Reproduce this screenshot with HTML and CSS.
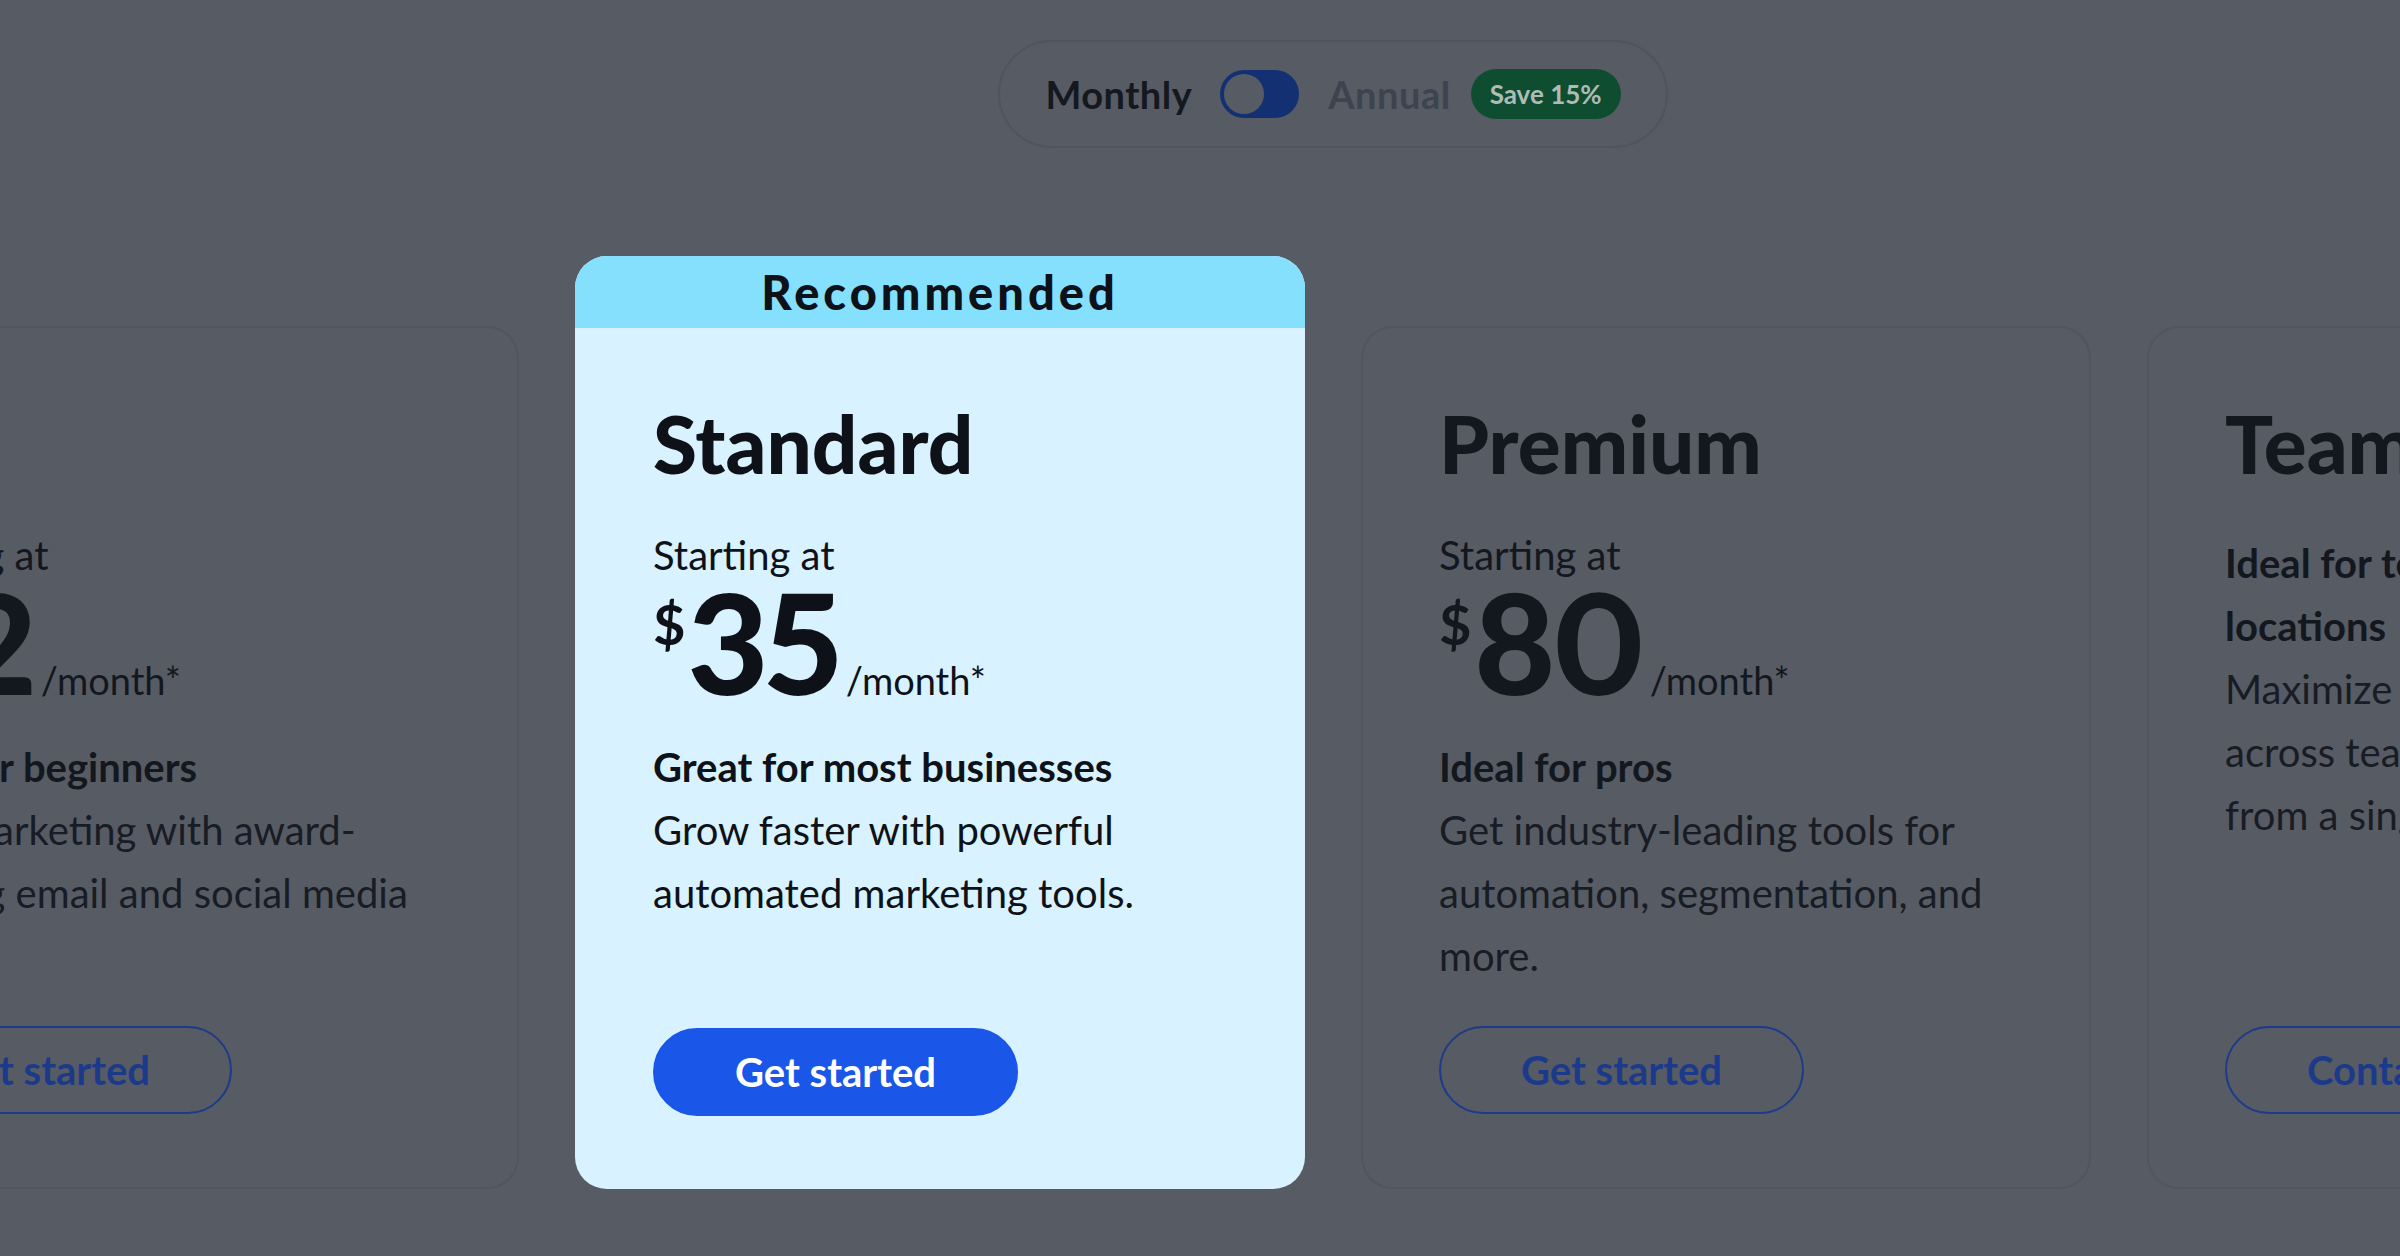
FILE: index.html
```html
<!DOCTYPE html>
<html lang="en">
<head>
  <meta charset="UTF-8">
  <title>Plans &amp; Pricing</title>
  <link rel="stylesheet" href="styles.css">
</head>
<body>

  <main class="pricing">

    <!-- Billing period switch -->
    <div class="billing">
      <div class="billing-toggle">
        <span class="billing-label is-active">Monthly</span>
        <span class="switch"><span class="switch-knob"></span></span>
        <span class="billing-label">Annual</span>
        <span class="save-badge">Save 15%</span>
      </div>
    </div>

    <!-- Plan cards -->
    <div class="plans">

      <section class="plan">
        <div class="plan-body">
          <h2 class="plan-name">Lite</h2>
          <p class="plan-from">Starting at</p>
          <p class="plan-price"><span class="cur">$</span><span class="amount">12</span><span class="per">/month*</span></p>
          <p class="plan-lead">Ideal for beginners</p>
          <p class="plan-desc">Start marketing with award-winning email and social media tools.</p>
          <button class="plan-cta">Get started</button>
        </div>
      </section>

      <section class="plan plan--featured">
        <div class="plan-ribbon">Recommended</div>
        <div class="plan-body">
          <h2 class="plan-name">Standard</h2>
          <p class="plan-from">Starting at</p>
          <p class="plan-price"><span class="cur">$</span><span class="amount">35</span><span class="per">/month*</span></p>
          <p class="plan-lead">Great for most businesses</p>
          <p class="plan-desc">Grow faster with powerful automated marketing tools.</p>
          <button class="plan-cta">Get started</button>
        </div>
      </section>

      <section class="plan">
        <div class="plan-body">
          <h2 class="plan-name">Premium</h2>
          <p class="plan-from">Starting at</p>
          <p class="plan-price"><span class="cur">$</span><span class="amount">80</span><span class="per">/month*</span></p>
          <p class="plan-lead">Ideal for pros</p>
          <p class="plan-desc">Get industry-leading tools for automation, segmentation, and more.</p>
          <button class="plan-cta">Get started</button>
        </div>
      </section>

      <section class="plan">
        <div class="plan-body">
          <h2 class="plan-name">Teams</h2>
          <p class="plan-lead plan-lead--first">Ideal for teams and multiple locations</p>
          <p class="plan-desc">Maximize your impact<br>across teams and locations<br>from a single account.</p>
          <button class="plan-cta">Contact sales</button>
        </div>
      </section>

    </div>
  </main>

</body>
</html>
```

FILE: styles.css
```css
html, body {
  overflow: hidden;
}

body {
  margin: 0;
  height: 1256px;
  background: #575b64;
  font-family: Lato, 'Open Sans', sans-serif;
  color: #13171e;
}

p, h2 {
  margin: 0;
}

/* the row of cards is wider than the window, so the wrapper is shifted left */
.pricing {
  width: 3088px;
  margin-left: -211px;
  padding-top: 40px;
}

/* Monthly / Annual switch */
.billing {
  display: flex;
  justify-content: center;
}

.billing-toggle {
  display: flex;
  align-items: center;
  height: 108px;
  box-sizing: border-box;
  padding: 0 45px;
  border: 2px solid #50545c;
  border-radius: 54px;
}

.billing-label {
  font-size: 38px;
  font-weight: 700;
  letter-spacing: 0.5px;
  color: #3e4350;
}

.billing-label.is-active {
  color: #14181f;
}

.switch {
  display: flex;
  align-items: center;
  width: 79px;
  height: 48px;
  box-sizing: border-box;
  padding: 4px;
  margin: 0 29px 0 28px;
  border-radius: 24px;
  background: #133172;
}

.switch-knob {
  width: 40px;
  height: 40px;
  border-radius: 50%;
  background: #575b64;
}

.save-badge {
  display: flex;
  align-items: center;
  height: 50px;
  margin-left: 20px;
  padding: 0 19px;
  border-radius: 25px;
  background: #0f4d31;
  color: #aebcb5;
  font-size: 26px;
  font-weight: 700;
}

/* Cards */
.plans {
  display: flex;
  gap: 56px;
  height: 933px;
  margin-top: 108px;
}

.plan {
  flex: none;
  width: 730px;
  box-sizing: border-box;
  margin-top: 70px;
  border: 2px solid #51555e;
  border-radius: 32px;
  display: flex;
  flex-direction: column;
}

.plan--featured {
  margin-top: 0;
  border: none;
  background: #d9f2ff;
  overflow: hidden;
  color: #0e1218;
}

.plan-ribbon {
  height: 72px;
  display: flex;
  align-items: center;
  justify-content: center;
  background: #85e0fe;
  font-size: 47px;
  font-weight: 900;
  letter-spacing: 4px;
}

.plan-body {
  flex: 1;
  display: flex;
  flex-direction: column;
  padding: 67px 76px 73px;
}

.plan--featured .plan-body {
  padding-left: 78px;
}

.plan-name {
  font-size: 80px;
  font-weight: 900;
  line-height: 96px;
}

.plan-from {
  margin-top: 40px;
  font-size: 40px;
  line-height: 48px;
}

/* font-size set on the line itself so the strut matches the big digits */
.plan-price {
  margin-top: 4px;
  font-size: 140px;
  font-weight: 900;
  line-height: 116px;
  white-space: nowrap;
}

.plan-price .cur {
  font-size: 56px;
  font-weight: 700;
  line-height: 1;
  vertical-align: 50px;
}

.plan-price .amount {
  margin-left: 2px;
  letter-spacing: -4px;
  font-variant-numeric: proportional-nums;
}

.plan-price .per {
  margin-left: 8px;
  font-size: 38px;
  font-weight: 400;
  line-height: 1;
}

.plan-lead {
  margin-top: 37px;
  font-size: 40px;
  font-weight: 700;
  line-height: 63px;
}

.plan-lead--first {
  margin-top: 41px;
}

.plan-desc {
  font-size: 40px;
  line-height: 63px;
  color: #181c24;
}

.plan--featured .plan-desc {
  color: #0e1218;
}

.plan-cta {
  margin-top: auto;
  align-self: flex-start;
  height: 88px;
  padding: 0 80px;
  border: 2px solid #1d3b8a;
  border-radius: 44px;
  background: transparent;
  color: #1c3a8a;
  font-family: inherit;
  font-size: 40px;
  font-weight: 700;
}

.plan--featured .plan-cta {
  border-color: #1a56e8;
  background: #1a56e8;
  color: #fff;
}
```
